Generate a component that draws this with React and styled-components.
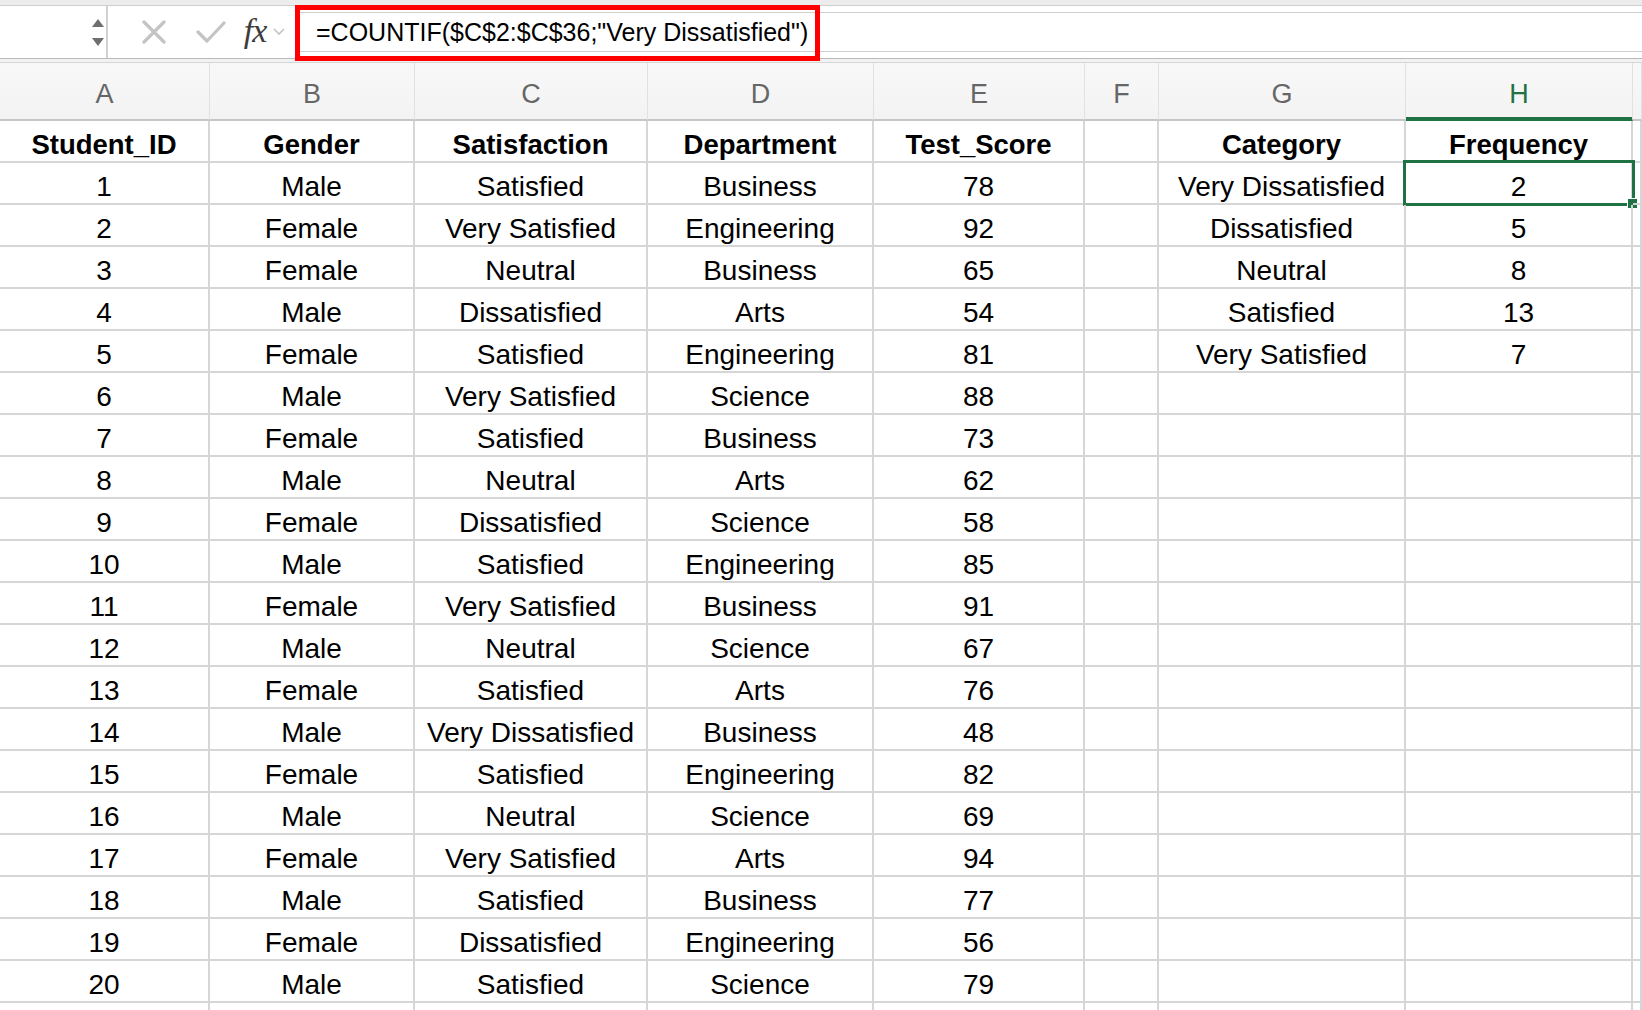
import React from "react";
import styled, { createGlobalStyle } from "styled-components";

const GlobalStyle = createGlobalStyle`
  html, body {
    margin: 0;
    padding: 0;
    background: #ffffff;
    overflow: hidden;
  }
  body {
    font-family: "Liberation Sans", Arial, sans-serif;
  }
`;

const Page = styled.div`
  width: 1642px;
  height: 1010px;
  overflow: hidden;
  position: relative;
  background: #fff;
`;

const TopStrip = styled.div`
  height: 5px;
  background: #ececec;
  border-bottom: 1px solid #cfcfcf;
`;

const FormulaBar = styled.div`
  display: flex;
  height: 52px;
  background: #fff;
`;

const NameBox = styled.div`
  width: 108px;
  border-right: 2px solid #d2d2d2;
  display: flex;
  justify-content: flex-end;
  align-items: center;
  padding-right: 2px;
  box-sizing: border-box;
`;

const Spinner = styled.div`
  display: flex;
  flex-direction: column;
  gap: 11px;
  align-items: center;
`;

const Tri = styled.div`
  width: 0;
  height: 0;
  border-left: 6px solid transparent;
  border-right: 6px solid transparent;
  ${(p) =>
    p.$down
      ? "border-top: 8px solid #6f6f6f;"
      : "border-bottom: 8px solid #6f6f6f;"}
`;

const Tools = styled.div`
  width: 187px;
  display: flex;
  align-items: center;
  padding-left: 32px;
  box-sizing: border-box;
`;

const ToolIcon = styled.div`
  display: flex;
  align-items: center;
  justify-content: center;
  width: ${(p) => p.$w}px;
  height: 52px;
  margin-left: ${(p) => p.$gap || 0}px;
`;

const Fx = styled.span`
  font-family: "Liberation Serif", "DejaVu Serif", serif;
  font-style: italic;
  font-size: 34px;
  color: #3c3c3c;
  letter-spacing: -1px;
  margin-top: -2px;
`;

const FieldWrap = styled.div`
  flex: 1;
  display: flex;
  align-items: center;
`;

const Field = styled.div`
  flex: 1;
  height: 38px;
  border-top: 1px solid #cfcfcf;
  border-bottom: 1px solid #cfcfcf;
  display: flex;
  align-items: center;
  padding-left: 21px;
  font-size: 25px;
  color: #000;
  white-space: nowrap;
`;

const Highlight = styled.div`
  position: absolute;
  left: 295px;
  top: 5px;
  width: 525px;
  height: 56px;
  border: 5px solid #ff0000;
  box-sizing: border-box;
  pointer-events: none;
`;

const Divider = styled.div`
  height: 3px;
  background: #f2f2f2;
  border-top: 1px solid #b9b9b9;
  border-bottom: 1px solid #d6d6d6;
`;

const COLS = "210px 205px 233px 226px 211px 74px 247px 227px 1fr";

const Grid = styled.div`
  display: grid;
  grid-template-columns: ${COLS};
`;

const ColHead = styled.div`
  height: 58px;
  box-sizing: border-box;
  background: linear-gradient(#f8f8f8, #f3f3f3);
  border-right: 1px solid #e1e1e1;
  border-bottom: 2px solid ${(p) => (p.$active ? "#1f7244" : "#c6c6c6")};
  ${(p) => p.$active && "box-shadow: inset 0 -2px 0 #1f7244;"}
  text-align: center;
  padding-top: 16px;
  line-height: 30px;
  font-size: 27px;
  color: ${(p) => (p.$active ? "#1f7244" : "#666666")};
`;

const Cell = styled.div`
  position: relative;
  height: 42px;
  box-sizing: border-box;
  border-right: 2px solid #d6d6d6;
  border-bottom: 2px solid #d6d6d6;
  text-align: center;
  padding-top: 9px;
  line-height: 30px;
  font-size: ${(p) => (p.$bold ? "27.5px" : "28px")};
  font-weight: ${(p) => (p.$bold ? 700 : 400)};
  color: #000;
  white-space: nowrap;
`;

const Selection = styled.div`
  position: absolute;
  left: -3px;
  top: -3px;
  right: -4px;
  bottom: -3px;
  border: 3px solid #1f7244;
  pointer-events: none;
`;

const Handle = styled.div`
  position: absolute;
  right: -6px;
  bottom: -6px;
  width: 9px;
  height: 9px;
  background: #1f7244;
  border: 1px solid #fff;
`;

const letters = ["A", "B", "C", "D", "E", "F", "G", "H", ""];

const data = [
  ["Student_ID", "Gender", "Satisfaction", "Department", "Test_Score"],
  [1, "Male", "Satisfied", "Business", 78],
  [2, "Female", "Very Satisfied", "Engineering", 92],
  [3, "Female", "Neutral", "Business", 65],
  [4, "Male", "Dissatisfied", "Arts", 54],
  [5, "Female", "Satisfied", "Engineering", 81],
  [6, "Male", "Very Satisfied", "Science", 88],
  [7, "Female", "Satisfied", "Business", 73],
  [8, "Male", "Neutral", "Arts", 62],
  [9, "Female", "Dissatisfied", "Science", 58],
  [10, "Male", "Satisfied", "Engineering", 85],
  [11, "Female", "Very Satisfied", "Business", 91],
  [12, "Male", "Neutral", "Science", 67],
  [13, "Female", "Satisfied", "Arts", 76],
  [14, "Male", "Very Dissatisfied", "Business", 48],
  [15, "Female", "Satisfied", "Engineering", 82],
  [16, "Male", "Neutral", "Science", 69],
  [17, "Female", "Very Satisfied", "Arts", 94],
  [18, "Male", "Satisfied", "Business", 77],
  [19, "Female", "Dissatisfied", "Engineering", 56],
  [20, "Male", "Satisfied", "Science", 79],
  ["", "", "", "", ""],
];

const summary = [
  ["Category", "Frequency"],
  ["Very Dissatisfied", 2],
  ["Dissatisfied", 5],
  ["Neutral", 8],
  ["Satisfied", 13],
  ["Very Satisfied", 7],
];

const XIcon = () => (
  <svg width="24" height="24" viewBox="0 0 24 24">
    <path d="M2 2 L22 22 M22 2 L2 22" stroke="#c4c4c4" strokeWidth="3.2" strokeLinecap="round" />
  </svg>
);

const CheckIcon = () => (
  <svg width="30" height="24" viewBox="0 0 30 24">
    <path d="M2 12 L11 21 L28 3" stroke="#c4c4c4" strokeWidth="3.2" fill="none" strokeLinecap="round" strokeLinejoin="round" />
  </svg>
);

const Chevron = () => (
  <svg width="12" height="8" viewBox="0 0 12 8">
    <path d="M1 1 L6 6 L11 1" stroke="#c4c4c4" strokeWidth="1.6" fill="none" />
  </svg>
);

const App = () => {
  return (
    <Page>
      <GlobalStyle />
      <TopStrip />
      <FormulaBar>
        <NameBox>
          <Spinner>
            <Tri />
            <Tri $down />
          </Spinner>
        </NameBox>
        <Tools>
          <ToolIcon $w={28}>
            <XIcon />
          </ToolIcon>
          <ToolIcon $w={30} $gap={28}>
            <CheckIcon />
          </ToolIcon>
          <ToolIcon $w={34} $gap={12}>
            <Fx>fx</Fx>
          </ToolIcon>
          <ToolIcon $w={14}>
            <Chevron />
          </ToolIcon>
        </Tools>
        <FieldWrap>
          <Field>=COUNTIF($C$2:$C$36;"Very Dissatisfied")</Field>
        </FieldWrap>
      </FormulaBar>
      <Divider />
      <Highlight />
      <Grid>
        {letters.map((l, i) => (
          <ColHead key={i} $active={l === "H"}>
            {l}
          </ColHead>
        ))}
        {data.map((row, r) => {
          const side = summary[r] || ["", ""];
          return (
            <React.Fragment key={r}>
              {row.map((v, c) => (
                <Cell key={c} $bold={r === 0}>
                  {v}
                </Cell>
              ))}
              <Cell />
              <Cell $bold={r === 0}>{side[0]}</Cell>
              <Cell $bold={r === 0}>
                {side[1]}
                {r === 1 && (
                  <Selection>
                    <Handle />
                  </Selection>
                )}
              </Cell>
              <Cell />
            </React.Fragment>
          );
        })}
      </Grid>
    </Page>
  );
};

export default App;
